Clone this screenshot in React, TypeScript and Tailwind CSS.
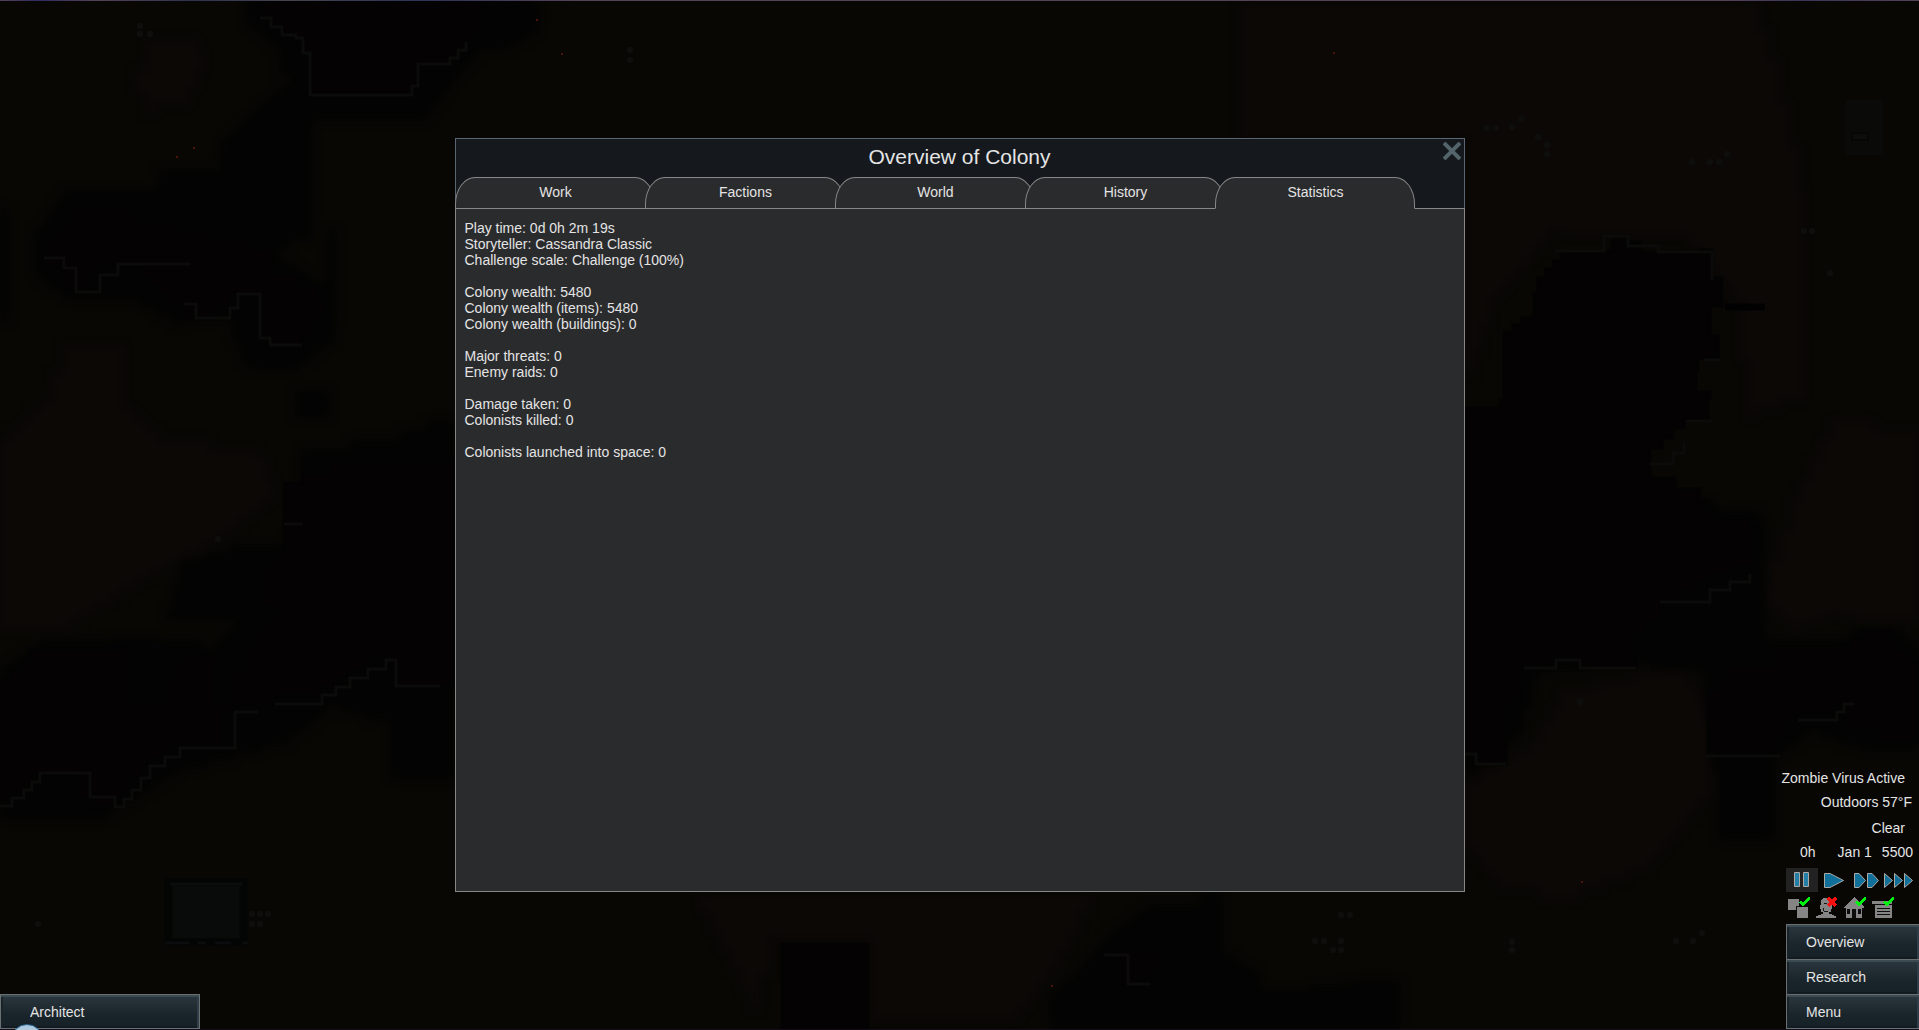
import { useState, type ReactNode } from "react";

const tabs = ["Work", "Factions", "World", "History", "Statistics"];

const statistics = [
  ["Play time: 0d 0h 2m 19s", "Storyteller: Cassandra Classic", "Challenge scale: Challenge (100%)"],
  ["Colony wealth: 5480", "Colony wealth (items): 5480", "Colony wealth (buildings): 0"],
  ["Major threats: 0", "Enemy raids: 0"],
  ["Damage taken: 0", "Colonists killed: 0"],
  ["Colonists launched into space: 0"],
];

type Point = [number, number];

/** Turns slanted edges into the square steps of the tile grid. */
function tiled(points: Point[], closed = false) {
  const all = closed ? [...points, points[0]] : points;
  let d = `M${all[0][0]} ${all[0][1]}`;
  for (let i = 1; i < all.length; i++) {
    const [x0, y0] = all[i - 1];
    const [x1, y1] = all[i];
    const dx = x1 - x0;
    const dy = y1 - y0;
    const steps = Math.max(1, Math.round(Math.min(Math.abs(dx), Math.abs(dy)) / 9));
    for (let s = 1; s <= steps; s++) {
      d += `H${Math.round(x0 + (dx * s) / steps)}V${Math.round(y0 + (dy * s) / steps)}`;
    }
  }
  return closed ? `${d}Z` : d;
}

const rocks: Point[][] = [
  [[260, 0], [260, 18], [282, 35], [296, 38], [310, 68], [310, 95], [400, 95], [412, 86], [418, 64], [450, 58], [466, 42], [480, 20], [480, 0]],
  [[72, 205], [118, 203], [138, 222], [165, 215], [180, 232], [208, 237], [252, 249], [272, 256], [272, 275], [300, 285], [318, 296], [325, 318], [310, 336], [302, 348], [270, 345], [260, 338], [260, 294], [238, 294], [230, 308], [212, 318], [196, 318], [184, 304], [165, 294], [142, 268], [118, 264], [100, 275], [92, 292], [76, 292], [64, 268], [44, 258], [44, 240], [60, 222]],
  [[284, 524], [284, 483], [302, 475], [330, 462], [454, 455], [454, 686], [396, 686], [396, 660], [386, 660], [350, 678], [320, 695], [275, 704], [235, 712], [222, 746], [180, 748], [150, 766], [132, 790], [115, 807], [90, 797], [78, 774], [40, 773], [24, 790], [0, 806], [0, 680], [30, 650], [118, 648], [130, 670], [130, 704], [166, 704], [166, 678], [180, 656], [206, 656], [214, 704], [232, 704], [232, 674], [244, 645], [276, 605], [262, 592], [262, 565], [284, 545]],
  [[1538, 278], [1562, 252], [1604, 251], [1612, 240], [1628, 242], [1640, 252], [1700, 250], [1712, 278], [1722, 306], [1710, 336], [1718, 358], [1698, 370], [1696, 392], [1710, 398], [1708, 420], [1684, 428], [1662, 448], [1650, 464], [1650, 478], [1700, 500], [1715, 518], [1750, 528], [1756, 566], [1710, 582], [1682, 600], [1662, 602], [1662, 622], [1645, 634], [1636, 668], [1580, 668], [1574, 660], [1550, 662], [1548, 668], [1524, 668], [1520, 700], [1508, 712], [1506, 764], [1478, 764], [1474, 754], [1465, 754], [1465, 408], [1500, 400], [1504, 332], [1522, 318], [1534, 294]],
  [[1708, 755], [1708, 690], [1725, 666], [1775, 658], [1775, 647], [1838, 645], [1862, 630], [1890, 640], [1908, 660], [1919, 668], [1919, 742], [1880, 742], [1876, 728], [1852, 724], [1844, 704], [1830, 712], [1796, 720], [1780, 752]],
  [[782, 944], [868, 944], [868, 1030], [782, 1030]],
  [[1118, 950], [1168, 950], [1160, 972], [1140, 986], [1118, 986]],
];

const shadows: Point[][] = [
  [[245, 0], [540, 0], [540, 35], [510, 50], [478, 60], [460, 80], [435, 112], [430, 120], [314, 122], [312, 240], [290, 250], [272, 256], [325, 290], [335, 345], [300, 370], [250, 365], [232, 320], [190, 325], [140, 300], [75, 300], [35, 270], [35, 228], [62, 190], [158, 200], [158, 170], [220, 158], [220, 140], [265, 98], [292, 75], [280, 45], [245, 20]],
  [[0, 208], [9, 208], [9, 322], [0, 322]],
  [[327, 228], [336, 228], [336, 322], [327, 322]],
  [[296, 390], [330, 385], [330, 418], [296, 420]],
  [[165, 610], [180, 560], [228, 545], [284, 535], [300, 450], [400, 430], [454, 410], [454, 780], [390, 778], [390, 720], [340, 705], [290, 745], [235, 760], [180, 775], [110, 820], [0, 815], [0, 665], [38, 640], [110, 638], [160, 640], [205, 650], [235, 620]],
  [[1700, 500], [1715, 510], [1760, 520], [1765, 640], [1810, 640], [1850, 628], [1890, 630], [1919, 650], [1919, 750], [1860, 745], [1820, 730], [1785, 755], [1775, 840], [1725, 840], [1718, 770], [1704, 670], [1650, 662], [1540, 680], [1524, 735], [1480, 775], [1465, 770], [1465, 680]],
  [[1075, 968], [1110, 930], [1145, 905], [1200, 905], [1200, 890], [1222, 890], [1222, 955], [1248, 970], [1260, 990], [1310, 985], [1350, 980], [1400, 985], [1400, 1030], [1040, 1030], [1050, 990]],
];

const sands: Point[][] = [
  [[145, 40], [190, 40], [205, 70], [190, 105], [155, 115], [135, 70]],
  [[62, 345], [118, 345], [125, 410], [160, 440], [260, 460], [275, 500], [220, 545], [150, 580], [70, 630], [0, 640], [0, 440], [40, 400]],
  [[1240, 2], [1750, 2], [1770, 60], [1800, 190], [1805, 400], [1755, 420], [1740, 300], [1690, 235], [1560, 230], [1500, 300], [1465, 400], [1465, 138], [1240, 138]],
  [[1790, 500], [1830, 420], [1919, 440], [1919, 620], [1850, 615], [1800, 630], [1760, 590]],
  [[1560, 690], [1670, 665], [1700, 700], [1710, 800], [1650, 870], [1580, 900], [1500, 880], [1465, 840], [1465, 780], [1530, 740]],
  [[700, 893], [1100, 893], [1060, 970], [1020, 1020], [870, 1028], [870, 940], [782, 940], [760, 1010], [730, 950]],
];

const ledges: Point[][] = [
  [[260, 18], [282, 35], [296, 38], [310, 68], [310, 95], [400, 95], [412, 86], [418, 64], [450, 58], [466, 42]],
  [[44, 258], [64, 268], [76, 292], [92, 292], [100, 275], [118, 264], [190, 264]],
  [[184, 304], [196, 318], [212, 318], [230, 308], [238, 294], [260, 294], [260, 338], [270, 345], [302, 345]],
  [[284, 524], [303, 524]],
  [[0, 806], [24, 790], [40, 773], [78, 773], [90, 797], [115, 807], [132, 790], [150, 766], [180, 748], [222, 748], [235, 712], [258, 712]],
  [[275, 704], [308, 704], [350, 678], [386, 660], [396, 660], [396, 686], [440, 686]],
  [[1555, 251], [1604, 251], [1604, 236], [1628, 236], [1628, 246], [1658, 246], [1658, 252], [1700, 252], [1712, 280]],
  [[1704, 360], [1720, 360]],
  [[1686, 421], [1712, 421]],
  [[1650, 464], [1662, 464], [1684, 442]],
  [[1465, 754], [1476, 764], [1506, 764]],
  [[1524, 668], [1550, 668], [1556, 660], [1580, 660], [1580, 668], [1636, 668]],
  [[1660, 602], [1695, 602], [1710, 590], [1750, 574]],
  [[1706, 756], [1780, 756]],
  [[1798, 720], [1830, 720], [1844, 704], [1854, 704]],
  [[1104, 955], [1120, 955], [1128, 984], [1150, 984]],
];

const boulders = [
  [140, 26], [140, 34], [150, 34], [630, 50], [630, 60], [1487, 128], [1496, 128], [1512, 127], [1521, 119],
  [1538, 137], [1547, 145], [1547, 154], [1692, 162], [1710, 162], [1719, 162], [1727, 154], [1804, 231], [1812, 231],
  [1830, 273], [252, 914], [260, 914], [268, 914], [252, 924], [260, 924], [38, 924], [218, 539], [1580, 702],
  [1512, 942], [1512, 950], [1676, 941], [1693, 941], [1702, 933], [1315, 941], [1324, 941], [1341, 941],
  [1341, 915], [1350, 915], [1333, 950], [1341, 950],
];

const embers = [
  [536, 19], [561, 53], [176, 156], [193, 147], [1581, 881], [1051, 985], [1333, 52],
];

function GameMap() {
  return (
    <svg
      viewBox="0 0 1919 1030"
      preserveAspectRatio="xMidYMid slice"
      className="col-start-1 row-start-1 size-full"
      aria-hidden="true"
    >
      <defs>
        <filter id="soft" x="-5%" y="-5%" width="110%" height="110%" colorInterpolationFilters="sRGB">
          <feGaussianBlur stdDeviation="4" />
        </filter>
        <linearGradient id="horizon">
          <stop offset="0" stopColor="#544257" />
          <stop offset="0.02" stopColor="#2f2c62" />
          <stop offset="0.05" stopColor="#544257" />
          <stop offset="0.1" stopColor="#2e3350" />
          <stop offset="0.15" stopColor="#46444f" />
          <stop offset="0.22" stopColor="#2e3358" />
          <stop offset="0.3" stopColor="#544257" />
          <stop offset="0.9" stopColor="#544257" />
          <stop offset="0.94" stopColor="#39355a" />
          <stop offset="1" stopColor="#544257" />
        </linearGradient>
      </defs>
      <rect width="1919" height="1030" fill="#080704" />
      <g filter="url(#soft)">
        {sands.map((points, i) => (
          <path key={i} d={tiled(points, true)} fill="#0b0806" />
        ))}
        {shadows.map((points, i) => (
          <path key={i} d={tiled(points, true)} fill="#030303" />
        ))}
      </g>
      {rocks.map((points, i) => (
        <path key={i} d={tiled(points, true)} fill="#040203" stroke="#030303" strokeWidth="3" />
      ))}
      {ledges.map((points, i) => (
        <path key={i} d={tiled(points)} fill="none" stroke="#0b0b0a" strokeWidth="3" />
      ))}
      <path d="M1725 307H1765" stroke="#020102" strokeWidth="7" />
      <rect x="168" y="882" width="76" height="60" fill="none" stroke="#030404" strokeWidth="7" />
      <rect x="173" y="886" width="66" height="52" fill="#090a0a" />
      <path d="M170 884H242M165 943H189M198 943H206M215 943H231M242 943H248" stroke="#0a0c0d" strokeWidth="3" />
      <path d="M1846 100H1883V155H1846Z" fill="#0a0a09" />
      <rect x="1852" y="133" width="16" height="7" fill="#0d0d0c" stroke="#030303" />
      {boulders.map(([x, y]) => (
        <rect key={`${x}-${y}`} x={x - 3} y={y - 3} width="6" height="6" rx="2" fill="#0e0e0c" />
      ))}
      {embers.map(([x, y]) => (
        <rect key={`${x}-${y}`} x={x} y={y} width="2" height="2" fill="#4c130b" />
      ))}
      <rect width="1919" height="1" fill="url(#horizon)" />
      <rect y="1029" width="1919" height="1" fill="#110c17" />
    </svg>
  );
}

function BevelButton({ children, className }: { children: ReactNode; className: string }) {
  return (
    <button
      type="button"
      className={`h-[35px] border-t border-l border-[#6a6f71] bg-linear-to-b from-[#2b373e] via-[#1a252b] via-60% to-[#162027] text-left shadow-[inset_0_2px_0_#3c4a52,inset_2px_0_0_#18242a,inset_-2px_0_0_#2e3d48,inset_0_-2px_0_#121b22] ${className}`}
    >
      {children}
    </button>
  );
}

const speeds = [
  { label: "Pause", shapes: ["8.5,4.5 13.5,4.5 13.5,18.5 8.5,18.5", "17.5,4.5 22.5,4.5 22.5,18.5 17.5,18.5"] },
  { label: "Normal speed", shapes: ["6.5,5.5 12,5.5 25.5,12.5 12,19.5 6.5,19.5"] },
  { label: "Fast speed", shapes: ["4.5,5.5 9,5.5 15.5,12.5 9,19.5 4.5,19.5", "17.5,5.5 22,5.5 28.5,12.5 22,19.5 17.5,19.5"] },
  { label: "Superfast speed", shapes: ["2.5,5.5 10.5,12.5 2.5,19.5", "12.5,5.5 20.5,12.5 12.5,19.5", "22.5,5.5 30.5,12.5 22.5,19.5"] },
];

function Check() {
  return <path d="M13 6L15 5L17 7L22 1H24V3L18 10H16Z" fill="#00f010" />;
}

const toggles: { label: string; art: ReactNode }[] = [
  {
    label: "Zones",
    art: (
      <>
        <path d="M2 3H13V14H2ZM11 11H22V22H11Z" fill="#858585" />
        <path d="M10.500 14V10.500H13" fill="none" stroke="#111" />
        <Check />
      </>
    ),
  },
  {
    label: "Colonist bar",
    art: (
      <>
        <path d="M8 3H9V2H16V3H18V13H17V16H15V18H18V19H20V20H22V22H2V20H4V19H7V18H9V16H7V13H6V9H7V4H8Z" fill="#858585" />
        <path d="M10 7.500H13M9.500 12V15M10 15.500H14" fill="none" stroke="#141414" />
        <path d="M14 2L22 10M22 2L14 10" stroke="#f81010" strokeWidth="3" />
      </>
    ),
  },
  {
    label: "Roofs",
    art: (
      <>
        <path d="M12 1L14 2L22 11V12H20V22H4V12H2V11Z" fill="#858585" />
        <path d="M5 13H8V18H5ZM16 13H19V18H16ZM10 13H14V22H10Z" fill="#0c0c0c" />
        <Check />
      </>
    ),
  },
  {
    label: "Stockpiles",
    art: (
      <>
        <path d="M2 5H22V8H2ZM5 9H22V22H5Z" fill="#858585" />
        <path d="M4 8.500H22M7 12.500H20M7 15.500H20M7 18.500H20" stroke="#0c0c0c" />
        <Check />
      </>
    ),
  },
];

function StatusCorner() {
  return (
    <aside className="z-10 col-start-1 row-start-1 flex flex-col place-self-end pb-px text-sm leading-4">
      <p className="pr-[14px] text-right">Zombie Virus Active</p>
      <p className="mt-2 pr-[7px] text-right">Outdoors 57°F</p>
      <p className="mt-[10px] pr-[14px] text-right">Clear</p>
      <p className="mt-2 flex justify-end pr-[6px]">
        <span className="mr-[22px]">0h</span>
        <span className="mr-[10px]">Jan 1</span>
        <span>5500</span>
      </p>
      <div className="mt-2 ml-auto flex pr-[5px]">
        {speeds.map((speed, i) => (
          <button key={speed.label} type="button" aria-label={speed.label} className={i === 0 ? "bg-[#222222]" : ""}>
            <svg width="32" height="24" viewBox="0 0 32 24" aria-hidden="true">
              {speed.shapes.map((points) => (
                <polygon key={points} points={points} fill={i === 0 ? "#247fa8" : "#10709a"} stroke="#aaa9a4" />
              ))}
            </svg>
          </button>
        ))}
      </div>
      <div className="mt-1 ml-auto flex w-[133px] gap-1">
        {toggles.map((toggle) => (
          <button key={toggle.label} type="button" aria-label={toggle.label}>
            <svg width="24" height="24" viewBox="0 0 24 24" shapeRendering="crispEdges" aria-hidden="true">
              {toggle.art}
            </svg>
          </button>
        ))}
      </div>
      <nav className="mt-1 ml-auto flex w-[133px] flex-col">
        {["Overview", "Research", "Menu"].map((item) => (
          <BevelButton key={item} className="pl-[19px] last:border-b">
            {item}
          </BevelButton>
        ))}
      </nav>
    </aside>
  );
}

function ColonyDialog() {
  const [selected, setSelected] = useState("Statistics");
  return (
    <section
      role="dialog"
      aria-labelledby="dialog-title"
      className="z-10 col-start-1 row-start-1 flex min-h-[754px] w-[1010px] max-w-full flex-col place-self-center"
    >
      <header className="relative border border-b-0 border-[#5a6672] bg-[#15191d] pt-[6px]">
        <h1 id="dialog-title" className="text-center text-[21px] leading-6">
          Overview of Colony
        </h1>
        <button type="button" aria-label="Close" className="absolute top-[3px] right-[3px]">
          <svg width="18" height="18" viewBox="0 0 18 18" aria-hidden="true">
            <path d="M1 1L17 17M17 1L1 17" stroke="#53646a" strokeWidth="4" />
          </svg>
        </button>
        <div role="tablist" className="-mx-px mt-2 -mb-px flex">
          {tabs.map((tab) => (
            <button
              key={tab}
              type="button"
              role="tab"
              aria-selected={tab === selected}
              onClick={() => setSelected(tab)}
              className="-mr-[10px] h-8 w-[200px] rounded-t-[20px_27px] border border-b-[#878787] border-[#878787] bg-[#2a2b2d] pb-[3px] pl-[2px] text-sm leading-4 aria-selected:z-10 aria-selected:border-b-[#2a2b2d]"
            >
              {tab}
            </button>
          ))}
        </div>
      </header>
      <div role="tabpanel" className="flex grow flex-col gap-4 border border-[#878787] bg-[#2a2b2d] px-[9px] py-[11px] text-sm leading-4">
        {statistics.map((group) => (
          <div key={group[0]}>
            {group.map((line) => (
              <p key={line}>{line}</p>
            ))}
          </div>
        ))}
      </div>
    </section>
  );
}

export default function App() {
  return (
    <main className="relative grid h-screen grid-cols-1 grid-rows-1 overflow-hidden bg-[#080704] font-['Liberation_Sans',Arial,sans-serif] text-[#e4e4e4]">
      <GameMap />
      <ColonyDialog />
      <div className="z-10 col-start-1 row-start-1 flex self-end justify-self-start pb-px text-sm leading-4">
        <BevelButton className="w-[200px] border-r border-b pl-[29px]">Architect</BevelButton>
      </div>
      <StatusCorner />
      <div className="absolute -bottom-[26px] left-[11px] z-20 size-8 rounded-full border border-[#2d6894] bg-linear-to-b from-[#a9c4da] to-[#dce8f0]" />
    </main>
  );
}
